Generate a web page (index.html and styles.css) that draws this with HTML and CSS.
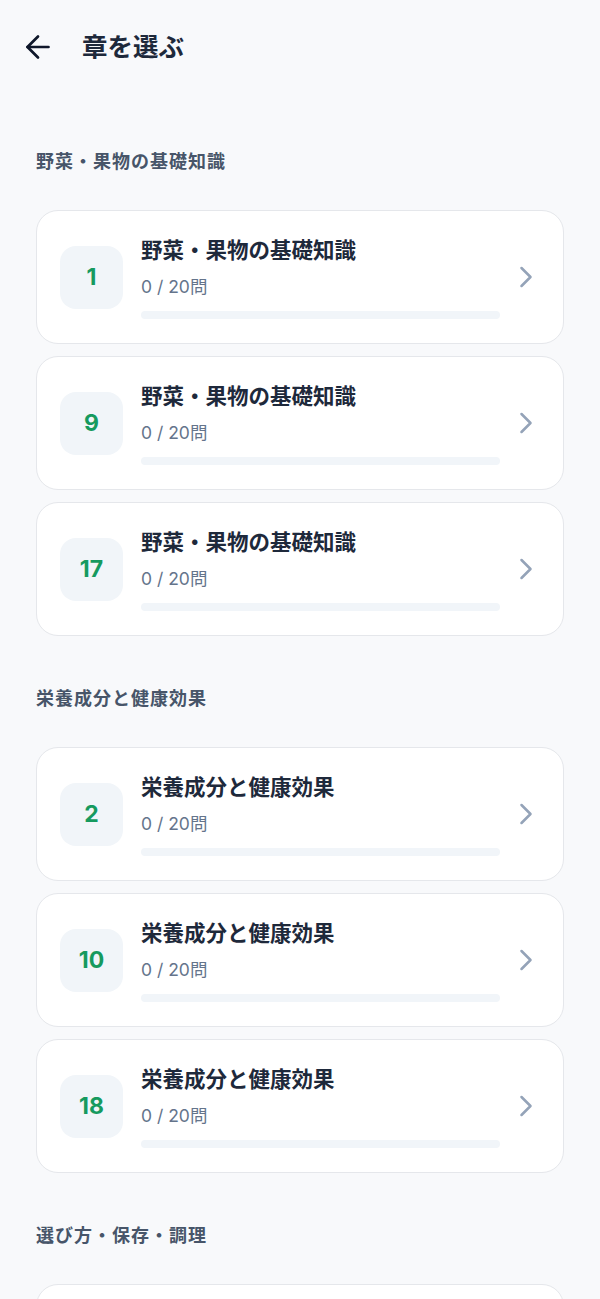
FILE: index.html
```html
<!DOCTYPE html>
<html lang="ja">
<head>
<meta charset="utf-8">
<title>章を選ぶ</title>
<link rel="stylesheet" href="styles.css">
</head>
<body>
<header class="header">
  <button class="back" aria-label="戻る">
    <svg viewBox="0 0 24 24" width="36" height="36" fill="none" stroke="currentColor" stroke-width="1.8" stroke-linecap="round" stroke-linejoin="round"><path d="m12 19-7-7 7-7"/><path d="M19 12H5"/></svg>
  </button>
  <h1 class="title">章を選ぶ</h1>
</header>
<main class="main">
  <section class="section">
    <h2 class="section-label">野菜・果物の基礎知識</h2>
    <div class="cards">
      <div class="card"><div class="badge">1</div><div class="content"><div class="card-title">野菜・果物の基礎知識</div><div class="count">0 / 20問</div><div class="bar"><div class="fill" style="width:0%"></div></div></div><svg class="chev" viewBox="0 0 24 24" width="36" height="36" fill="none" stroke="currentColor" stroke-width="1.7" stroke-linecap="round" stroke-linejoin="round"><path d="m9 18 6-6-6-6"/></svg></div>
      <div class="card"><div class="badge">9</div><div class="content"><div class="card-title">野菜・果物の基礎知識</div><div class="count">0 / 20問</div><div class="bar"><div class="fill" style="width:0%"></div></div></div><svg class="chev" viewBox="0 0 24 24" width="36" height="36" fill="none" stroke="currentColor" stroke-width="1.7" stroke-linecap="round" stroke-linejoin="round"><path d="m9 18 6-6-6-6"/></svg></div>
      <div class="card"><div class="badge">17</div><div class="content"><div class="card-title">野菜・果物の基礎知識</div><div class="count">0 / 20問</div><div class="bar"><div class="fill" style="width:0%"></div></div></div><svg class="chev" viewBox="0 0 24 24" width="36" height="36" fill="none" stroke="currentColor" stroke-width="1.7" stroke-linecap="round" stroke-linejoin="round"><path d="m9 18 6-6-6-6"/></svg></div>
    </div>
  </section>
  <section class="section">
    <h2 class="section-label">栄養成分と健康効果</h2>
    <div class="cards">
      <div class="card"><div class="badge">2</div><div class="content"><div class="card-title">栄養成分と健康効果</div><div class="count">0 / 20問</div><div class="bar"><div class="fill" style="width:0%"></div></div></div><svg class="chev" viewBox="0 0 24 24" width="36" height="36" fill="none" stroke="currentColor" stroke-width="1.7" stroke-linecap="round" stroke-linejoin="round"><path d="m9 18 6-6-6-6"/></svg></div>
      <div class="card"><div class="badge">10</div><div class="content"><div class="card-title">栄養成分と健康効果</div><div class="count">0 / 20問</div><div class="bar"><div class="fill" style="width:0%"></div></div></div><svg class="chev" viewBox="0 0 24 24" width="36" height="36" fill="none" stroke="currentColor" stroke-width="1.7" stroke-linecap="round" stroke-linejoin="round"><path d="m9 18 6-6-6-6"/></svg></div>
      <div class="card"><div class="badge">18</div><div class="content"><div class="card-title">栄養成分と健康効果</div><div class="count">0 / 20問</div><div class="bar"><div class="fill" style="width:0%"></div></div></div><svg class="chev" viewBox="0 0 24 24" width="36" height="36" fill="none" stroke="currentColor" stroke-width="1.7" stroke-linecap="round" stroke-linejoin="round"><path d="m9 18 6-6-6-6"/></svg></div>
    </div>
  </section>
  <section class="section">
    <h2 class="section-label">選び方・保存・調理</h2>
    <div class="cards">
      <div class="card"><div class="badge">3</div><div class="content"><div class="card-title">選び方・保存・調理</div><div class="count">0 / 20問</div><div class="bar"><div class="fill" style="width:0%"></div></div></div><svg class="chev" viewBox="0 0 24 24" width="36" height="36" fill="none" stroke="currentColor" stroke-width="1.7" stroke-linecap="round" stroke-linejoin="round"><path d="m9 18 6-6-6-6"/></svg></div>
      <div class="card"><div class="badge">11</div><div class="content"><div class="card-title">選び方・保存・調理</div><div class="count">0 / 20問</div><div class="bar"><div class="fill" style="width:0%"></div></div></div><svg class="chev" viewBox="0 0 24 24" width="36" height="36" fill="none" stroke="currentColor" stroke-width="1.7" stroke-linecap="round" stroke-linejoin="round"><path d="m9 18 6-6-6-6"/></svg></div>
    </div>
  </section>
</main>
</body>
</html>
```
FILE: styles.css
```css
* { box-sizing: border-box; }
html, body { margin: 0; padding: 0; }
body {
  background: #f8f9fb;
  font-family: Inter, "Noto Sans CJK JP", sans-serif;
  color: #1e293b;
}
.header {
  height: 94px;
  display: flex;
  align-items: center;
  padding: 0 0 0 20px;
  gap: 26px;
}
.back {
  width: 36px;
  height: 36px;
  padding: 0;
  border: 0;
  background: none;
  color: #0f172a;
  display: flex;
}
.title {
  margin: 0;
  font-size: 25.5px;
  font-weight: 700;
  color: #1e293b;
  line-height: 36px;
}
.main {
  padding: 56px 36px 40px;
  display: flex;
  flex-direction: column;
  gap: 51px;
}
.section-label {
  margin: 0 0 36px;
  font-size: 18px;
  line-height: 24px;
  font-weight: 700;
  color: #475569;
  letter-spacing: 1px;
}
.cards {
  display: flex;
  flex-direction: column;
  gap: 12px;
}
.card {
  height: 134px;
  background: #fff;
  border: 1px solid #e5e7eb;
  border-radius: 22px;
  display: flex;
  align-items: center;
  padding: 0 19px 0 23px;
}
.badge {
  width: 63px;
  height: 63px;
  flex: none;
  border-radius: 16px;
  background: #f1f5f9;
  color: #169a5f;
  font-size: 23px;
  font-weight: 700;
  display: flex;
  align-items: center;
  justify-content: center;
}
.content {
  flex: 1;
  margin-left: 18px;
  margin-right: 8px;
  display: flex;
  flex-direction: column;
}
.card-title {
  font-size: 21.5px;
  line-height: 28px;
  font-weight: 700;
  color: #1e293b;
}
.count {
  margin-top: 10px;
  font-size: 17.5px;
  line-height: 26px;
  color: #64748b;
}
.bar {
  margin-top: 11px;
  height: 8px;
  border-radius: 4px;
  background: #f1f5f9;
  overflow: hidden;
}
.fill {
  height: 100%;
  background: #169a5f;
}
.chev {
  flex: none;
  color: #94a3b8;
}
```
